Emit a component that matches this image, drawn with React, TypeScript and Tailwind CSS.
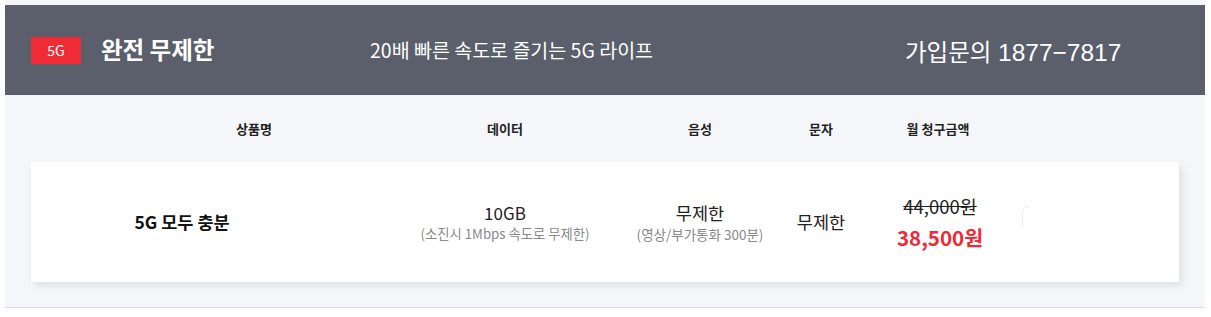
import React from 'react';

const kr = '[font-family:"Noto_Sans_CJK_KR","Noto_Sans",sans-serif]';

export default function App() {
  return (
    <div className="min-h-screen bg-white">
      <div className={`ml-[5px] w-[1200px] bg-[#f5f6fa] pt-[5px] ${kr}`}>
        {/* Header */}
        <div className="flex h-[90px] items-center bg-[#5a5f6b] pl-[26px] text-white">
          <span className="flex h-[27px] w-[50px] items-center justify-center bg-[#ee2b36] text-[14px] leading-none">
            5G
          </span>
          <h1 className="ml-[20px] w-[269px] text-[23.5px] font-bold leading-none">
            완전 무제한
          </h1>
          <p className="w-[535px] text-[19.5px] leading-none">
            20배 빠른 속도로 즐기는 5G 라이프
          </p>
          <p className='mt-[6px] text-[23.5px] leading-none [font-family:"Liberation_Sans","Noto_Sans_CJK_KR",sans-serif]'>
            가입문의 <span className="text-[24.5px]">1877−7817</span>
          </p>
        </div>

        {/* Column titles */}
        <div className="flex h-[67px] items-center text-[13px] font-bold text-[#222]">
          <span className="ml-[149px] w-[200px] text-center">상품명</span>
          <span className="ml-[101px] w-[100px] text-center">데이터</span>
          <span className="ml-[95px] w-[100px] text-center">음성</span>
          <span className="ml-[31px] w-[80px] text-center">문자</span>
          <span className="ml-[17px] w-[120px] text-center">월 청구금액</span>
        </div>

        {/* Plan row */}
        <div className="pb-[25px] pl-[26px] border-b border-[#dcdde6]">
          <div className="flex h-[120px] w-[1148px] items-center bg-white shadow-[3px_4px_8px_rgba(0,0,0,0.09)]">
            <div className="ml-[51px] w-[200px] text-center text-[17.5px] font-bold text-[#111]">5G 모두 충분</div>
            <div className="ml-[123px] w-[200px] text-center">
              <p className="text-[17px] leading-[24px] text-[#222]">10GB</p>
              <p className="text-[13.3px] leading-[18px] text-[#888]">(소진시 1Mbps 속도로 무제한)</p>
            </div>
            <div className="ml-[15px] w-[160px] text-center">
              <p className="text-[17.5px] leading-[24px] text-[#222]">무제한</p>
              <p className="text-[13.5px] leading-[18px] text-[#888]">(영상/부가통화 300분)</p>
            </div>
            <div className="ml-[1px] w-[80px] text-center text-[17.5px] text-[#222]">무제한</div>
            <div className="ml-[19px] w-[120px] -mt-[1px] text-center">
              <p className="text-[18.5px] leading-[24px] text-[#222] line-through">44,000원</p>
              <p className="mt-[6px] text-[20.5px] font-bold leading-[26px] text-[#ee2b36]">38,500원</p>
            </div>
            <div className="ml-[22px] -mt-[10px] h-[22px] w-[8px] rounded-tl-[6px] border-l border-t border-[#ececec]" />
          </div>
        </div>
      </div>
    </div>
  );
}
